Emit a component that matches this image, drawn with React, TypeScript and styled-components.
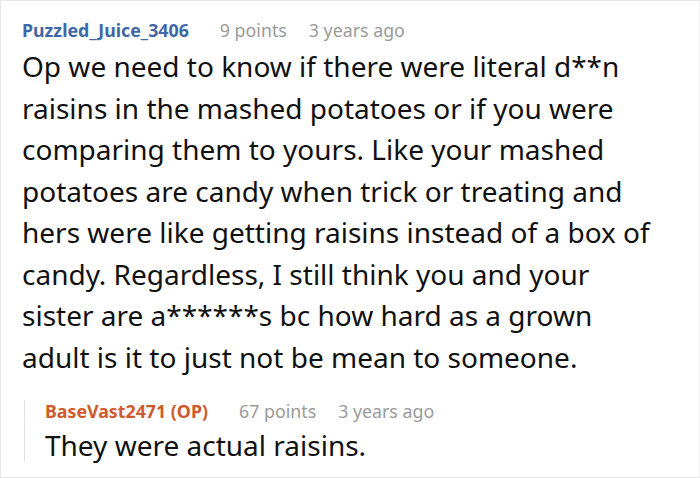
import styled, { createGlobalStyle } from "styled-components";

const Global = createGlobalStyle`
  html, body {
    margin: 0;
    padding: 0;
    background: #fff;
  }
  body {
    font-family: "Noto Sans", "Open Sans", sans-serif;
  }
`;

const Frame = styled.div`
  box-sizing: border-box;
  width: 700px;
  height: 478px;
  border: 1px solid #e6e6e6;
  border-right-color: #f2f2f2;
  padding: 13px 0 0 21px;
  overflow: hidden;
`;

const Comment = styled.div`
  display: flex;
  flex-direction: column;
`;

const Meta = styled.div<{ $tight?: boolean }>`
  display: flex;
  align-items: baseline;
  font-size: 17.8px;
  line-height: ${(p) => (p.$tight ? "22px" : "32px")};
`;

const Author = styled.span<{ $op?: boolean }>`
  font-weight: 700;
  color: ${(p) => (p.$op ? "#cf5a2b" : "#3e68a6")};
  margin-right: 31px;
`;

const Points = styled.span`
  color: #9a9a9a;
  margin-right: 22px;
`;

const Age = styled.span`
  color: #9a9a9a;
`;

const Body = styled.p<{ $reply?: boolean }>`
  margin: ${(p) => (p.$reply ? "6px 0 0" : "0")};
  font-size: 28px;
  line-height: ${(p) => (p.$reply ? "34px" : "41.5px")};
  color: #111;
  width: 640px;
`;

const Reply = styled.div`
  margin: 22px 0 0 2px;
  padding-left: 20px;
  border-left: 1px solid #e3e3e3;
`;

export default function App() {
  return (
    <>
      <Global />
      <Frame>
        <Comment>
          <Meta>
            <Author>Puzzled_Juice_3406</Author>
            <Points>9 points</Points>
            <Age>3 years ago</Age>
          </Meta>
          <Body>
            Op we need to know if there were literal d**n raisins in the mashed
            potatoes or if you were comparing them to yours. Like your mashed
            potatoes are candy when trick or treating and hers were like
            getting raisins instead of a box of candy. Regardless, I still
            think you and your sister are a******s bc how hard as a grown adult
            is it to just not be mean to someone.
          </Body>
          <Reply>
            <Meta $tight>
              <Author $op>BaseVast2471 (OP)</Author>
              <Points>67 points</Points>
              <Age>3 years ago</Age>
            </Meta>
            <Body $reply>They were actual raisins.</Body>
          </Reply>
        </Comment>
      </Frame>
    </>
  );
}
